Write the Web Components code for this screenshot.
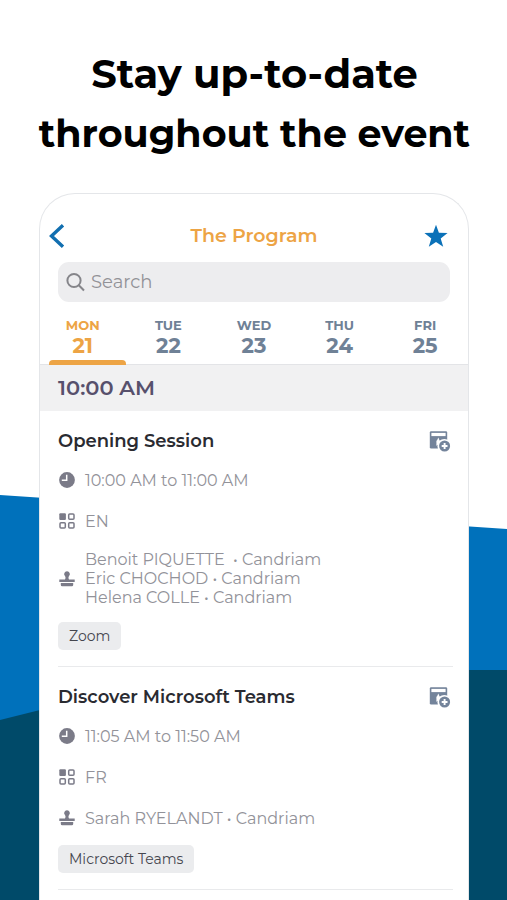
<!DOCTYPE html>
<html lang="en">
<head>
<meta charset="utf-8">
<meta name="viewport" content="width=device-width, initial-scale=1">
<title>The Program</title>
<style>
  html, body { margin: 0; height: 100%; }
  body { font-family: Montserrat, Inter, "Open Sans", sans-serif; background: #fff; overflow: hidden; }
</style>
</head>
<body>
<promo-page>
  <promo-heading slot="heading"><span slot="first">Stay up-to-date</span><span slot="second">throughout the event</span></promo-heading>
  <phone-card>
    <nav-bar>The Program</nav-bar>
    <search-field></search-field>
    <day-tabs></day-tabs>
    <time-band>10:00 AM</time-band>
    <session-item>
      <span slot="title">Opening Session</span>
      <info-row icon="clock">10:00 AM to 11:00 AM</info-row>
      <info-row icon="grid">EN</info-row>
      <info-row icon="stamp"><div>Benoit PIQUETTE &nbsp;• Candriam</div><div>Eric CHOCHOD • Candriam</div><div>Helena COLLE • Candriam</div></info-row>
      <tag-chip slot="tag">Zoom</tag-chip>
    </session-item>
    <session-item>
      <span slot="title">Discover Microsoft Teams</span>
      <info-row icon="clock">11:05 AM to 11:50 AM</info-row>
      <info-row icon="grid">FR</info-row>
      <info-row icon="stamp">Sarah RYELANDT • Candriam</info-row>
      <tag-chip slot="tag">Microsoft Teams</tag-chip>
    </session-item>
  </phone-card>
</promo-page>

<script>
const define = (name, html) => customElements.define(name, class extends HTMLElement {
  constructor() {
    super();
    this.attachShadow({ mode: 'open' }).innerHTML =
      '<style>*{box-sizing:border-box}button{font:inherit;border:0;background:none;padding:0;margin:0;cursor:pointer;color:inherit}svg{display:block}</style>' +
      (typeof html === 'function' ? html(this) : html);
  }
});

define('promo-page', `
  <style>
    :host { display: grid; grid-template: minmax(0, 1fr) / minmax(0, 1fr); height: 100vh; overflow: hidden; }
    .waves, main { grid-area: 1 / 1; }
    .waves { width: 100%; height: 100%; }
    main { display: flex; flex-direction: column; min-height: 0; padding: 44px 38px 0 39px; gap: 29px; }
  </style>
  <svg class="waves" viewBox="0 0 507 900" preserveAspectRatio="none" aria-hidden="true">
    <path fill="#0071bb" d="M0 495L507 529V900H0Z"/>
    <path fill="#004a69" d="M0 720L200 670H507V900H0Z"/>
  </svg>
  <main><slot name="heading"></slot><slot></slot></main>`);

define('promo-heading', `
  <style>
    :host { display: block; margin: 0 -39px 0 -38px; }
    h1 { margin: 0; text-align: center; line-height: 60px; font-weight: 700; color: #000; white-space: nowrap; }
    div { height: 60px; }
    .first { font-size: 40px; }
    .second { font-size: 38px; }
  </style>
  <h1><div class="first"><slot name="first"></slot></div><div class="second"><slot name="second"></slot></div></h1>`);

define('phone-card', `
  <style>
    :host { display: flex; flex-direction: column; flex: 1; min-height: 0; overflow: hidden; box-sizing: border-box;
      background: #fff; border: 1px solid #e4e6e9; border-bottom: 0; border-radius: 36px 36px 0 0; }
    ::slotted(*) { flex: none; }
  </style>
  <slot></slot>`);

define('nav-bar', `
  <style>
    header { display: grid; grid-template-columns: 24px 1fr 24px; align-items: center; padding: 29px 20px 13px 6px; }
    h2 { margin: 0; padding-left: 14px; text-align: center; color: #eda445; font-size: 19px; line-height: 26px; font-weight: 600; }
  </style>
  <header>
    <button aria-label="Back"><svg width="24" height="26" viewBox="0 0 24 26" fill="none" stroke="#126fb0" stroke-width="3.400"><path d="M17 2.200L5.500 13L17 23.800"/></svg></button>
    <h2><slot></slot></h2>
    <button aria-label="Favourites"><svg width="24" height="24" viewBox="0 0 24 24" fill="#0b71b8"><path d="M12 0.800L14.900 8.800L23.600 9.100L16.700 14.400L19.200 22.800L12 17.900L4.800 22.800L7.300 14.400L0.400 9.100L9.100 8.800Z"/></svg></button>
  </header>`);

define('search-field', `
  <style>
    label { display: flex; align-items: center; gap: 5px; height: 40px; margin: 0 18px; padding: 0 8px; border-radius: 11px; background: #ededef; }
    input { flex: 1; min-width: 0; border: 0; padding: 0; outline: 0; background: none; font: inherit; font-size: 18px; line-height: 24px; color: #555; }
    input::placeholder { color: #929297; opacity: 1; }
  </style>
  <label>
    <svg width="20" height="20" viewBox="0 0 20 20" fill="none" stroke="#85858a" stroke-width="2"><circle cx="8" cy="8.500" r="6.600"/><path d="M12.800 13.300L18 18.500"/></svg>
    <input type="text" placeholder="Search" aria-label="Search">
  </label>`);

define('day-tabs', `
  <style>
    nav { display: grid; grid-template-columns: repeat(5, 1fr); height: 63px; padding-top: 14px; border-bottom: 1px solid #e3e4e7; color: #6f8196; font-weight: 700; }
    button { position: relative; display: flex; flex-direction: column; align-items: center; }
    .name { font-size: 13px; line-height: 18px; }
    .num { font-size: 21px; line-height: 24px; }
    .on { color: #eda445; }
    .on::after { content: ""; position: absolute; left: 9px; right: 0; bottom: -1px; height: 5px; border-radius: 4px 4px 0 0; background: #eda445; }
  </style>
  <nav aria-label="Days">
    ${[['MON', 21], ['TUE', 22], ['WED', 23], ['THU', 24], ['FRI', 25]].map(([d, n], i) =>
      `<button${i ? '' : ' class="on" aria-current="date"'}><span class="name">${d}</span><span class="num">${n}</span></button>`).join('')}
  </nav>`);

define('time-band', `
  <style>
    :host { display: block; padding: 10px 18px; background: #f1f1f2; color: #57506c; font-size: 21px; line-height: 26px; font-weight: 600; }
  </style>
  <slot></slot>`);

define('session-item', `
  <style>
    article { margin: 0 15px 0 18px; padding: 19px 0 16px; border-bottom: 1px solid #e9eaec; }
    .head { display: flex; justify-content: space-between; align-items: center; padding-right: 2px; }
    h3 { margin: 0; font-size: 18px; line-height: 22px; font-weight: 600; color: #2a2b31; }
    .rows { display: flex; flex-direction: column; gap: 17px; margin: 16px 0 15px; }
    button { height: 22px; }
  </style>
  <article>
    <div class="head">
      <h3><slot name="title"></slot></h3>
      <button aria-label="Add to calendar">
        <svg width="22" height="22" viewBox="0 0 22 22">
          <rect x=".800" y="1.200" width="17.400" height="17.400" rx="1.400" fill="#74849b"/>
          <rect x="2.400" y="2.900" width="14.200" height="3.200" fill="#fff"/>
          <path fill="#fff" d="M9.300 7.600L10.600 10.600L13.800 10.900L11.400 13L12.100 16.200L9.300 14.500L6.500 16.200L7.200 13L4.800 10.900L8 10.600Z"/>
          <path fill="#74849b" d="M4.600 9H7.400V17H4.600Z"/>
          <circle cx="15.300" cy="15.900" r="6.900" fill="#fff"/>
          <circle cx="15.600" cy="16" r="5.500" fill="#74849b"/>
          <path d="M15.600 13.100V18.900M12.700 16H18.500" stroke="#fff" stroke-width="1.900"/>
        </svg>
      </button>
    </div>
    <div class="rows"><slot></slot></div>
    <slot name="tag"></slot>
  </article>`);

const icons = {
  clock: '<circle cx="9" cy="9" r="7.900"/><path d="M8.700 3.800V9.300H3.800" fill="none" stroke="#fff" stroke-width="1.500"/>',
  grid: '<rect x="1.300" y="1.300" width="6.600" height="6.600" rx="1"/><g fill="none" stroke="#7b7b88" stroke-width="1.500"><rect x="10.700" y="2" width="5.300" height="5.300" rx="1"/><rect x="2" y="10.700" width="5.300" height="5.300" rx="1"/><rect x="10.700" y="10.700" width="5.300" height="5.300" rx="1"/></g>',
  stamp: '<path d="M9 1.300A2.800 2.800 0 0 1 11 6.100C10.300 7.300 10.300 8.500 11 9.500H16.700V11.900H1.300V9.500H7C7.700 8.500 7.700 7.300 7 6.100A2.800 2.800 0 0 1 9 1.300Z"/><path d="M2.800 12.900H15.200V14.900Q15.200 16.300 13.800 16.300H4.200Q2.800 16.300 2.800 14.900Z"/>'
};
define('info-row', el => `
  <style>
    :host { display: flex; align-items: center; gap: 9px; min-height: 24px; font-size: 16px; line-height: 19px; font-weight: 400; color: #929299; }
    svg { flex: none; }
  </style>
  <svg width="18" height="18" viewBox="0 0 18 18" fill="#7b7b88" aria-hidden="true">${icons[el.getAttribute('icon')]}</svg>
  <div><slot></slot></div>`);

define('tag-chip', `
  <style>
    :host { display: block; width: fit-content; padding: 4px 11px; border-radius: 5px; background: #ebecee; color: #45464e; font-size: 14px; line-height: 20px; font-weight: 400; }
  </style>
  <slot></slot>`);
</script>
</body>
</html>
